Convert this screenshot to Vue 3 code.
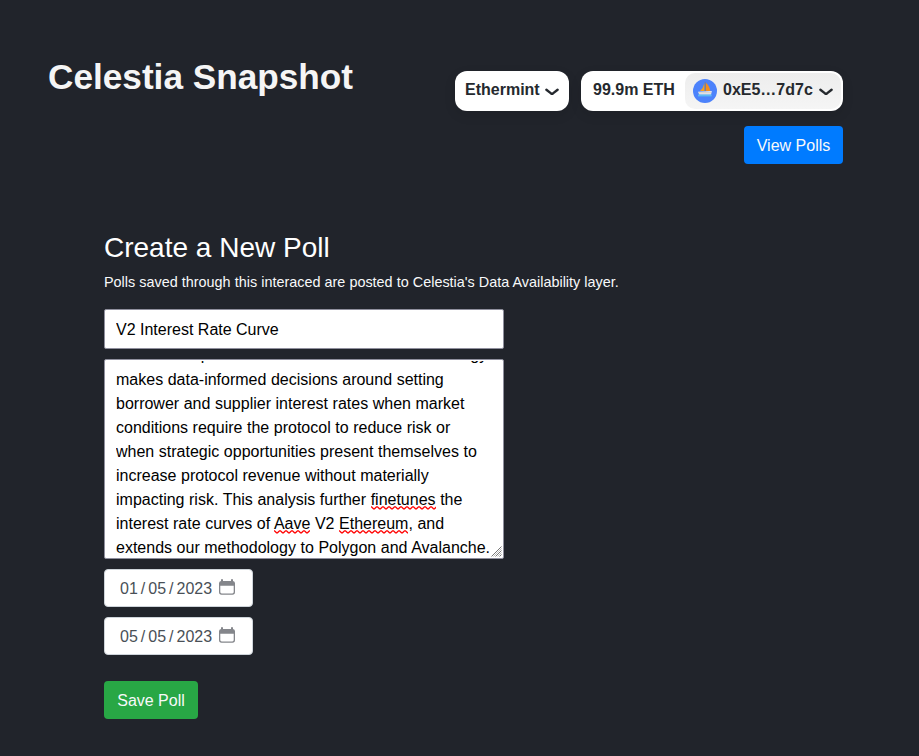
<script setup>
import { ref } from 'vue'

const title = ref('V2 Interest Rate Curve')
const lines = [
  [{ t: "Gauntlet's optimization of interest rates methodology" }],
  [{ t: 'makes data-informed decisions around setting' }],
  [{ t: 'borrower and supplier interest rates when market' }],
  [{ t: 'conditions require the protocol to reduce risk or' }],
  [{ t: 'when strategic opportunities present themselves to' }],
  [{ t: 'increase protocol revenue without materially' }],
  [{ t: 'impacting risk. This analysis further ' }, { t: 'finetunes', bad: true }, { t: ' the' }],
  [{ t: 'interest rate curves of ' }, { t: 'Aave', bad: true }, { t: ' V2 ' }, { t: 'Ethereum', bad: true }, { t: ', and' }],
  [{ t: 'extends our methodology to Polygon and Avalanche.' }],
]
const dates = [['01', '05', '2023'], ['05', '05', '2023']]
</script>

<template>
  <div class="page">
    <header class="header">
      <h1>Celestia Snapshot</h1>
      <div class="actions">
        <div class="wallet">
          <button class="chip chain">
            <span>Ethermint</span>
            <svg class="chevron" width="14" height="8" viewBox="0 0 14 8" fill="none"><path d="M1.4 1.8 6 5.4Q7 6.1 8 5.4L12.6 1.8" stroke="#25292e" stroke-width="2.4" stroke-linecap="round" /></svg>
          </button>
          <button class="chip account">
            <span class="balance">99.9m ETH</span>
            <span class="address">
              <svg class="avatar" width="24" height="24" viewBox="0 0 24 24">
                <circle cx="12" cy="12" r="12" fill="#4c82fb" />
                <path d="M11.5 4V12H7Q10.4 9 11.5 4Z" fill="#f9a11b" />
                <path d="M12.9 3.8Q16.7 7.2 17.2 12H12.9Z" fill="#f58e1d" />
                <path d="M12.2 3.3V12.8" stroke="#8d7b65" stroke-width=".8" />
                <path d="M5 12.7 18.9 11.9 17.9 15.7H6.3Z" fill="#e8eaed" />
                <path d="M5.7 13.8H18.4" stroke="#c7b7ae" stroke-width=".6" />
                <path d="M5 15.5H18.7V17.4H5Z" fill="#5db9f3" />
              </svg>
              <span>0xE5…7d7c</span>
              <svg class="chevron" width="14" height="8" viewBox="0 0 14 8" fill="none"><path d="M1.4 1.8 6 5.4Q7 6.1 8 5.4L12.6 1.8" stroke="#25292e" stroke-width="2.4" stroke-linecap="round" /></svg>
            </span>
          </button>
        </div>
        <button class="btn blue">View Polls</button>
      </div>
    </header>
    <main class="main">
      <h2>Create a New Poll</h2>
      <p class="hint">Polls saved through this interaced are posted to Celestia's Data Availability layer.</p>
      <input v-model="title" class="title-input" type="text" />
      <div class="description">
        <div class="text">
          <div v-for="(line, i) in lines" :key="i" class="line"><span v-for="(s, j) in line" :key="j" :class="{ misspelled: s.bad }">{{ s.t }}</span></div>
        </div>
        <svg class="grip" width="11" height="11" viewBox="0 0 11 11"><path d="M.5 10.5 10.5 .5M4.5 10.5 10.5 4.5M8.5 10.5 10.5 8.5" stroke="#666" stroke-width=".9" /><path d="M2.5 10.5 10.5 2.5M6.5 10.5 10.5 6.5" stroke="#aaa" stroke-width=".8" /></svg>
      </div>
      <div v-for="(d, i) in dates" :key="i" class="date">
        <span>{{ d[0] }}</span><span class="slash">/</span><span>{{ d[1] }}</span><span class="slash">/</span><span>{{ d[2] }}</span>
        <svg class="calendar" width="16" height="16" viewBox="0 0 16 16"><path d="M2 2V.9Q2 0 3 0T4 .9V2H12V.9Q12 0 13 0T14 .9V2Q16 2.3 16 4.3V13Q16 15.7 13.5 15.7H2.5Q0 15.7 0 13V4.3Q0 2.3 2 2ZM1.3 6.8V13Q1.3 14.4 2.7 14.4H13.3Q14.7 14.4 14.7 13V6.8Z" fill="#84868b" fill-rule="evenodd" /></svg>
      </div>
      <button class="btn green">Save Poll</button>
    </main>
  </div>
</template>

<style>
body { background: #21242b; }
</style>

<style scoped>
.page {
  box-sizing: border-box;
  min-height: 756px;
  padding: 48px 76px 0 48px;
  background: #21242b;
  color: #f8f9fa;
  font: 16px/24px "Liberation Sans", Arial, sans-serif;
}
* { box-sizing: border-box; }
button, input { font: inherit; border: 0; }
.header { display: flex; justify-content: space-between; align-items: flex-start; height: 183px; }
h1 { margin: 7px 0 0; font-size: 35.2px; line-height: 44px; font-weight: 700; color: #f5f5f5; white-space: nowrap; }
.actions { display: flex; flex-direction: column; align-items: flex-end; gap: 15px; padding-top: 23px; }
.wallet { display: flex; gap: 12px; }
.chip {
  display: flex;
  align-items: center;
  height: 40px;
  padding: 0;
  border-radius: 12px;
  background: #fff;
  color: #25292e;
  font-weight: 700;
  box-shadow: 0 4px 12px rgba(0, 0, 0, .1);
  white-space: nowrap;
}
.chip span { line-height: 20px; }
.chip > span:first-child, .address > span { padding-bottom: 3px; }
.chain { width: 114px; padding: 0 10px; justify-content: space-between; }
.chevron { margin-top: 1px; flex: none; }
.account { width: 262px; padding: 2px; justify-content: space-between; }
.balance { padding-left: 10px; }
.address {
  display: flex;
  align-items: center;
  gap: 6px;
  width: 156px;
  height: 36px;
  padding: 0 8px;
  border-radius: 10px;
  background: linear-gradient(#ededed, #f5f5f5);
}
.avatar { flex: none; }
.btn { height: 38px; padding: 1px 12px 0; border-radius: 4px; color: #f8f9fa; line-height: 24px; white-space: nowrap; }
.blue { width: 99px; background: #007bff; }
.green { width: 94px; margin-top: 16px; background: #28a745; }
.main { display: flex; flex-direction: column; align-items: flex-start; padding-left: 56px; }
h2 { margin: 0 0 6px; font-size: 28px; line-height: 34px; font-weight: 400; color: #fff; }
.hint { margin: 0 0 16px; font-size: 14.4px; line-height: 22px; word-spacing: .1px; white-space: nowrap; }
.title-input {
  width: 400px;
  height: 40px;
  padding: 2px 11px 0;
  border: 1px solid #8f8f9d;
  border-radius: 2px;
  background: #fff;
  color: #000;
}
.description {
  position: relative;
  width: 400px;
  height: 200px;
  margin: 10px 0;
  padding: 1px 0 0 11px;
  border: 1px solid #8f8f9d;
  border-radius: 2px;
  background: #fff;
  color: #000;
}
.text {
  display: flex;
  flex-direction: column;
  justify-content: flex-end;
  height: 197px;
  overflow: hidden;
  white-space: pre;
  word-spacing: .12px;
}
.line { flex: none; height: 24px; }
.line:first-child { margin-bottom: 1px; word-spacing: -.2px; }
.line:last-child { margin-bottom: -2px; }
.misspelled {
  padding-bottom: 2px;
  background: url("data:image/svg+xml,%3Csvg xmlns='http://www.w3.org/2000/svg' width='6' height='4'%3E%3Cpath d='M-1 .8H.5L2.5 2.8H3.5L5.5 .8H7' fill='none' stroke='red' stroke-width='1.3'/%3E%3C/svg%3E") repeat-x left bottom;
}
.grip { position: absolute; right: 1px; bottom: 1px; }
.date {
  display: flex;
  align-items: center;
  width: 149px;
  height: 38px;
  margin-bottom: 10px;
  padding: 1px 0 0 15px;
  border: 1px solid #ced4da;
  border-radius: 4px;
  background: #fff;
  color: #495057;
}
.slash { padding: 0 3px; }
.calendar { margin: -3px 0 0 7px; }
</style>
